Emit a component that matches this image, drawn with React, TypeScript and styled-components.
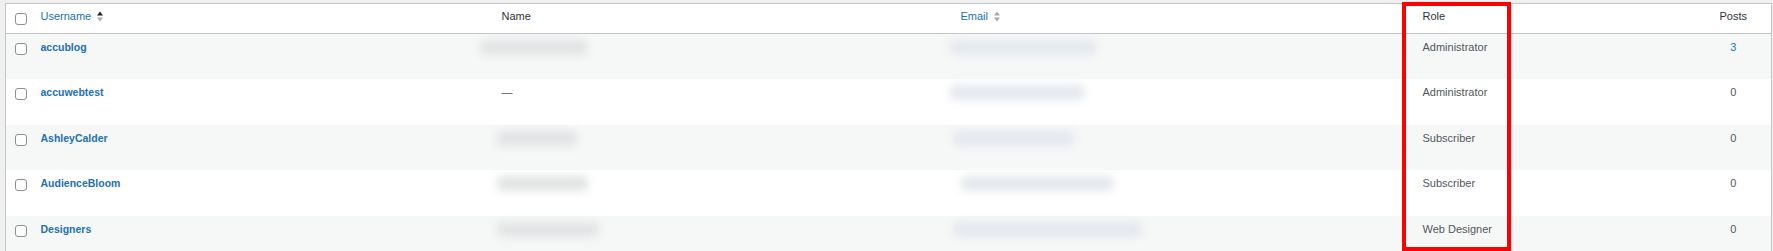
import styled, { createGlobalStyle } from "styled-components";

const GlobalStyle = createGlobalStyle`
  html, body {
    margin: 0;
    padding: 0;
    background: #f0f0f1;
    overflow: hidden;
  }
  body {
    font-family: "Liberation Sans", Arial, sans-serif;
    font-size: 11px;
    color: #2c3338;
  }
  *, *::before, *::after {
    box-sizing: border-box;
  }
`;

type User = {
  username: string;
  nameBlob?: { offset: number; width: number };
  dash?: boolean;
  emailBlob: { offset: number; width: number };
  role: string;
  posts: number;
};

const users: User[] = [
  {
    username: "accublog",
    nameBlob: { offset: -22, width: 108 },
    emailBlob: { offset: -11, width: 146 },
    role: "Administrator",
    posts: 3,
  },
  {
    username: "accuwebtest",
    dash: true,
    emailBlob: { offset: -11, width: 135 },
    role: "Administrator",
    posts: 0,
  },
  {
    username: "AshleyCalder",
    nameBlob: { offset: -5, width: 80 },
    emailBlob: { offset: -8, width: 121 },
    role: "Subscriber",
    posts: 0,
  },
  {
    username: "AudienceBloom",
    nameBlob: { offset: -5, width: 91 },
    emailBlob: { offset: 0, width: 153 },
    role: "Subscriber",
    posts: 0,
  },
  {
    username: "Designers",
    nameBlob: { offset: -5, width: 102 },
    emailBlob: { offset: -8, width: 189 },
    role: "Web Designer",
    posts: 0,
  },
];

const Page = styled.div`
  position: relative;
  padding: 3px 1px 0 5px;
`;

const Table = styled.table`
  width: 100%;
  border-collapse: collapse;
  table-layout: fixed;
  background: #fff;
  border: 1px solid #c3c4c7;
`;

const HeadRow = styled.tr`
  height: 30px;
  border-bottom: 1px solid #c3c4c7;
`;

const Th = styled.th<{ $width?: number; $center?: boolean }>`
  ${({ $width }) => ($width ? `width: ${$width}px;` : "")}
  text-align: ${({ $center }) => ($center ? "center" : "left")};
  font-weight: 400;
  line-height: 15px;
  padding: 5px 8px 4px;
  color: #2c3338;
  vertical-align: top;
`;

const CheckTh = styled.th`
  width: 27px;
  padding: 9px 0 0 9px;
  vertical-align: top;
  text-align: left;
`;

const SortLink = styled.span`
  display: inline-flex;
  align-items: center;
  gap: 6px;
  color: #2271b1;
`;

const Row = styled.tr`
  height: 45.5px;
  &:nth-child(odd) {
    background: #f6f7f7;
  }
`;

const Td = styled.td<{ $center?: boolean }>`
  vertical-align: top;
  line-height: 15px;
  padding: 6px 8px 0;
  color: #50575e;
  text-align: ${({ $center }) => ($center ? "center" : "left")};
  white-space: nowrap;
  overflow: visible;
`;

const CheckTd = styled.td`
  vertical-align: top;
  padding: 9px 0 0 9px;
`;

const Checkbox = styled.span`
  display: block;
  width: 12px;
  height: 12px;
  border: 1px solid #8c8f94;
  border-radius: 3px;
  background: #fff;
`;

const UserLink = styled.a`
  color: #2271b1;
  font-weight: 700;
  font-size: 10.5px;
  text-decoration: none;
`;

const PostsLink = styled.a`
  color: #2271b1;
  text-decoration: none;
`;

const Blurred = styled.span<{ $offset: number; $width: number; $tone: "gray" | "blue" }>`
  display: block;
  height: 15px;
  margin-left: ${({ $offset }) => $offset}px;
  width: ${({ $width }) => $width}px;
  border-radius: 5px;
  background: ${({ $tone }) => ($tone === "gray" ? "#e2e3e4" : "#e4e8ee")};
  filter: blur(4px);
`;

const Dash = styled.span`
  color: #50575e;
`;

const Highlight = styled.div`
  position: absolute;
  left: 1402px;
  top: 2px;
  width: 109px;
  height: 249px;
  border: 4px solid #ff0000;
  pointer-events: none;
`;

const SortIcon = ({ active }: { active?: boolean }) => (
  <svg width="6" height="11" viewBox="0 0 6 11" aria-hidden="true">
    <polygon points="0,4.5 3,0.5 6,4.5" fill={active ? "#1d2327" : "#a7aaad"} />
    <polygon points="0,6.5 3,10.5 6,6.5" fill="#a7aaad" />
  </svg>
);

export default function App() {
  return (
    <>
      <GlobalStyle />
      <Page>
        <Table>
          <thead>
            <HeadRow>
              <CheckTh>
                <Checkbox />
              </CheckTh>
              <Th $width={461}>
                <SortLink>
                  Username
                  <SortIcon active />
                </SortLink>
              </Th>
              <Th $width={459}>Name</Th>
              <Th $width={462}>
                <SortLink>
                  Email
                  <SortIcon />
                </SortLink>
              </Th>
              <Th $width={281}>Role</Th>
              <Th $center>Posts</Th>
            </HeadRow>
          </thead>
          <tbody>
            {users.map((u) => (
              <Row key={u.username}>
                <CheckTd>
                  <Checkbox />
                </CheckTd>
                <Td>
                  <UserLink href="#">{u.username}</UserLink>
                </Td>
                <Td>
                  {u.dash ? (
                    <Dash>—</Dash>
                  ) : (
                    u.nameBlob && (
                      <Blurred $tone="gray" $offset={u.nameBlob.offset} $width={u.nameBlob.width} />
                    )
                  )}
                </Td>
                <Td>
                  <Blurred $tone="blue" $offset={u.emailBlob.offset} $width={u.emailBlob.width} />
                </Td>
                <Td>{u.role}</Td>
                <Td $center>
                  {u.posts > 0 ? <PostsLink href="#">{u.posts}</PostsLink> : u.posts}
                </Td>
              </Row>
            ))}
          </tbody>
        </Table>
        <Highlight />
      </Page>
    </>
  );
}
